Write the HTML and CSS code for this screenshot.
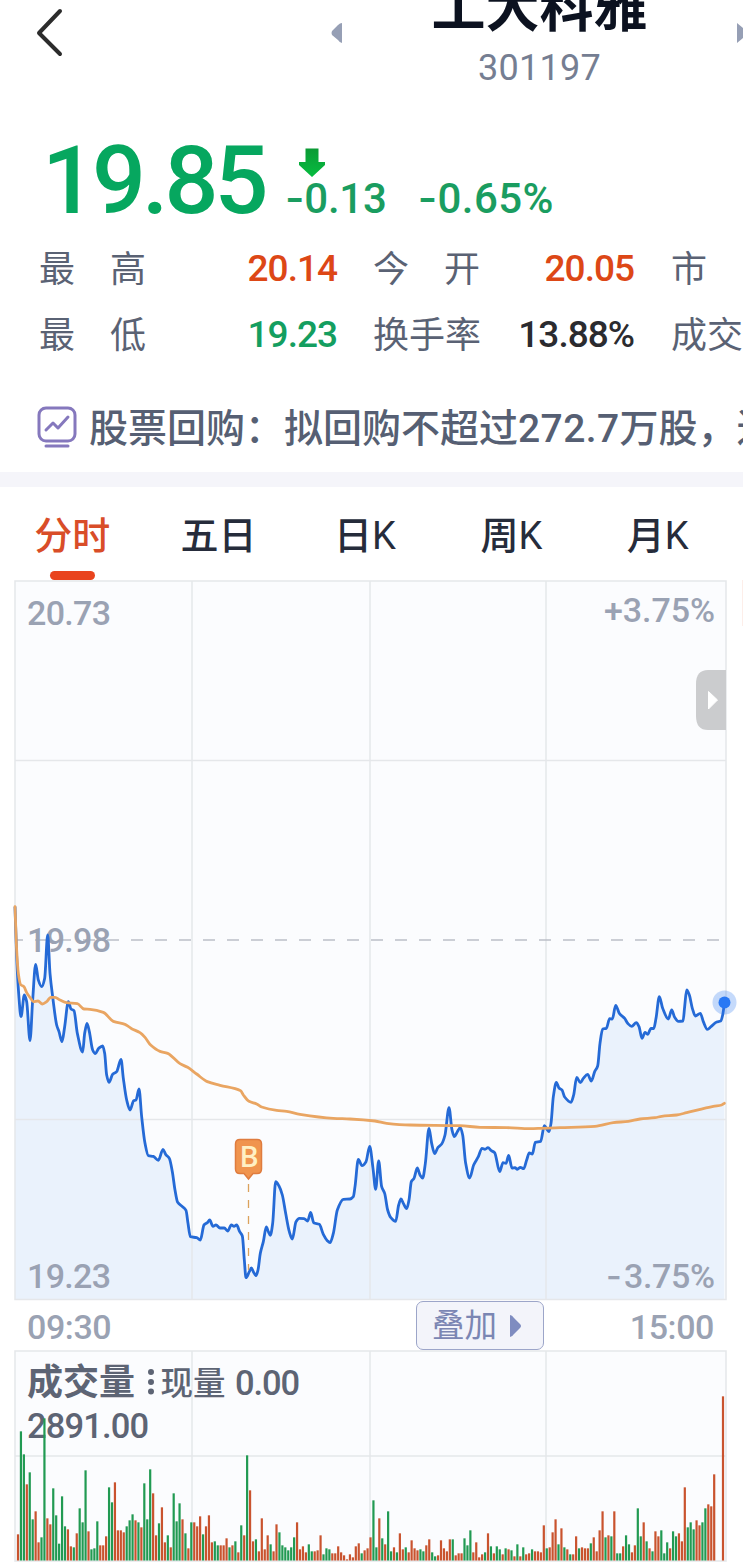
FILE: index.html
```html
<!DOCTYPE html>
<html lang="zh">
<head>
    <meta charset="UTF-8">
    <meta name="viewport" content="width=device-width, initial-scale=1.0">
    <title>工大科雅 301197</title>
    <link rel="stylesheet" href="styles.css">
</head>
<body>
    <header class="header">
        <svg class="back" width="28" height="50" viewBox="0 0 28 50"><path d="M25 3 L4 25 L25 46" /></svg>
        <svg class="prev" width="12" height="20" viewBox="0 0 12 20"><path d="M11 0 V20 Q9 20 7 17 L1 12 Q0 10 1 8 L7 2 Q9 0 11 0Z" /></svg>
        <div class="stock">
            <h1>工大科雅</h1>
            <div class="code">301197</div>
        </div>
        <svg class="next" width="12" height="20" viewBox="0 0 12 20"><path d="M0 0 V20 L12 10Z" /></svg>
    </header>

    <section class="quote">
        <div class="price">19.85</div>
        <div class="change">
            <svg class="arrow" width="28" height="30" viewBox="0 0 28 30">
                <defs>
                    <linearGradient id="arrowFill" x1="0" y1="0" x2="0" y2="1">
                        <stop offset="0" stop-color="#0b9a35" />
                        <stop offset="1" stop-color="#06bd40" />
                    </linearGradient>
                </defs>
                <path d="M7.500 0.500 H20.500 V14 H27 V17 L14 29 L1 17 V14 H7.500Z" fill="url(#arrowFill)" />
            </svg>
            <div class="change-values">
                <span><i class="sign">-</i>0.13</span>
                <span><i class="sign">-</i>0.65%</span>
            </div>
        </div>
    </section>

    <section class="stats">
        <div class="label"><span>最</span><span>高</span></div>
        <div class="value up">20.14</div>
        <div class="label"><span>今</span><span>开</span></div>
        <div class="value up">20.05</div>
        <div class="label"><span>市</span></div>
        <div class="label"><span>最</span><span>低</span></div>
        <div class="value down">19.23</div>
        <div class="label"><span>换</span><span>手</span><span>率</span></div>
        <div class="value">13.88%</div>
        <div class="label"><span>成</span><span>交</span></div>
    </section>

    <section class="news">
        <svg width="40" height="42" viewBox="0 0 40 42">
            <rect x="2" y="2" width="36" height="33" rx="7" />
            <path d="M9 24 L16 17 L21 22 L31 11" />
            <path d="M9 40 H31" />
        </svg>
        <span class="news-text">股票回购：拟回购不超过<b>272.7</b>万股，进</span>
    </section>

    <nav class="tabs">
        <a class="tab active">分时</a>
        <a class="tab">五日</a>
        <a class="tab">日<b>K</b></a>
        <a class="tab">周<b>K</b></a>
        <a class="tab">月<b>K</b></a>
    </nav>

    <svg class="price-chart" width="743" height="721" viewBox="0 580 743 721">
        <rect class="plot" x="15" y="581" width="711" height="718.5" />
        <path id="area" class="area" />
        <path class="grid" d="M15 760.5H726M15 1119.5H726M192 581V1299M370 581V1299M546 581V1299" />
        <rect class="frame" x="15" y="581" width="711" height="718.5" />
        <path class="base" d="M15 940H726" />
        <text class="axis" x="27" y="625" textLength="84">20.73</text>
        <text class="axis" x="27" y="952" textLength="84">19.98</text>
        <text class="axis" x="27" y="1288" textLength="84">19.23</text>
        <text class="axis" x="604" y="622" textLength="111">+3.75%</text>
        <text class="axis" x="624" y="1288" textLength="91">3.75%</text>
        <text class="axis sign" x="606" y="1288">-</text>
        <path id="line" class="line" />
        <path id="avg" class="avg" />
        <circle cx="724.5" cy="1002.5" r="12" fill="#2f7bf0" opacity=".28" />
        <circle cx="724.5" cy="1002.5" r="6" fill="#2878f4" />
        <path class="mark-line" d="M248.5 1184V1270" />
        <path class="mark" d="M240 1139.5H257Q261.500 1139.500 261.500 1144V1169Q261.500 1173.500 257 1173.500H253L248.500 1179L244 1173.500H240Q235.500 1173.500 235.500 1169V1144Q235.500 1139.500 240 1139.500Z" />
        <text class="mark-text" x="249" y="1167">B</text>
        <path class="handle" d="M726 670V730H708Q696 730 696 716V684Q696 670 708 670Z" />
        <path class="handle-arrow" d="M708.500 691.500L717.500 700L708.500 709Z" />
        <path class="next-panel" d="M742.500 580V626" />
    </svg>

    <div class="time-row">
        <span>09:30</span>
        <button class="overlay">叠加<svg width="13" height="24" viewBox="0 0 13 24"><path d="M1 1Q3 1 5 4L11 10Q13 12 11 14L5 20Q3 23 1 23Z" /></svg></button>
        <span>15:00</span>
    </div>

    <svg class="volume-chart" width="743" height="214" viewBox="0 1350 743 214">
        <rect class="plot" x="15" y="1351" width="711" height="210" />
        <path class="grid" d="M15 1456H726M192 1351V1560M370 1351V1560M546 1351V1560" />
        <rect class="frame" x="15" y="1351" width="711" height="210" />
        <text class="vol-title" x="27" y="1395">成交量</text>
        <path class="dots" d="M151 1372V1372M151 1382V1382M151 1391.500V1391.500" />
        <text class="vol-text cjk" x="160.500" y="1395">现量</text>
        <text class="vol-text" x="235" y="1395" textLength="65">0.00</text>
        <text class="vol-text" x="27" y="1438" textLength="122">2891.00</text>
        <g id="bars"></g>
    </svg>

    <script src="chart.js"></script>
</body>
</html>
```
FILE: styles.css
```css
body {
    margin: 0;
    width: 743px;
    height: 1564px;
    overflow: hidden;
    background: #fff;
    color: #2b2b2f;
    font-family: Roboto, "Noto Sans CJK SC", sans-serif;
    font-weight: 500;
}

.header {
    display: flex;
    height: 110px;
    overflow: hidden;
}

.header svg {
    flex: none;
    fill: #969fb5;
}

.header .back {
    margin: 8px 0 0 35px;
    fill: none;
    stroke: #2c2c2c;
    stroke-width: 4;
    stroke-linecap: round;
    stroke-linejoin: round;
}

.prev {
    margin: 23px 0 0 268px;
}

.stock {
    width: 393px;
    flex: none;
    text-align: center;
}

h1 {
    margin: -21px 0 0;
    height: 66px;
    line-height: 60px;
    font-size: 54px;
    font-weight: 700;
    color: #0c1220;
}

.code {
    line-height: 46px;
    font-size: 36px;
    font-weight: 400;
    letter-spacing: 0.3px;
    color: #757e92;
}

.next {
    margin: 23px 0 0 1px;
}

.quote {
    display: flex;
    height: 125px;
    padding-left: 42px;
}

.price {
    width: 243px;
    line-height: 142px;
    font-size: 95px;
    letter-spacing: -4px;
    color: #06a75f;
}

.arrow {
    display: block;
    margin: 38px 0 0 13px;
}

.change-values {
    display: flex;
    gap: 31px;
    line-height: 40px;
    font-size: 42px;
    color: #1a9d60;
}

.change-values span {
    letter-spacing: -0.2px;
}

.change-values span + span {
    letter-spacing: 0.4px;
}

.sign {
    font-family: Inter, sans-serif;
    font-style: normal;
}

.stats {
    display: grid;
    grid-template-columns: 107px 192px 35px 107px 155px 36px 107px;
    grid-template-rows: 66px 66px;
    margin-left: 39px;
    line-height: 66px;
    font-size: 36px;
}

.label {
    display: flex;
    justify-content: space-between;
    padding-top: 2px;
    font-weight: 400;
    color: #5a6274;
}

.stats .label:nth-child(5n + 3) {
    grid-column: 4;
}

.stats .label:nth-child(5n) {
    grid-column: 7;
}

.stats .label:nth-child(10) {
    justify-content: flex-start;
}

.value {
    text-align: right;
    padding: 1px 1px 0 0;
    font-size: 37px;
    letter-spacing: -1px;
}

.up {
    color: #dd4716;
}

.down {
    color: #149e60;
}

.news {
    display: flex;
    align-items: center;
    gap: 12px;
    height: 105px;
    padding: 15px 0 0 37px;
    box-sizing: border-box;
    white-space: nowrap;
    font-size: 39px;
    color: #565f73;
}

.news svg {
    flex: none;
    fill: none;
    stroke: #8578bd;
    stroke-width: 3;
    stroke-linecap: round;
    stroke-linejoin: round;
}

.news-text {
    margin-top: -4px;
}

.news b {
    font-weight: 500;
    letter-spacing: 0.4px;
}

.tabs {
    display: grid;
    grid-template-columns: repeat(5, 146.4px);
    height: 93px;
    border-top: 15px solid #f5f5fa;
}

.tab {
    position: relative;
    text-align: center;
    line-height: 98px;
    font-size: 38px;
    color: #262c3b;
    text-indent: -2px;
}

.tab b {
    font-weight: 400;
}

.tab.active {
    color: #d94d28;
}

.tab.active::after {
    content: '';
    position: absolute;
    left: 50px;
    top: 84px;
    width: 45px;
    height: 9px;
    border-radius: 5px;
    background: #e9441e;
}

.price-chart,
.volume-chart {
    display: block;
}

.plot {
    fill: #fbfcfe;
}

.grid,
.frame {
    fill: none;
    stroke: #e5e7ea;
    stroke-width: 1.5;
}

.area {
    fill: #eaf2fc;
}

.base {
    stroke: #bcbfc8;
    stroke-width: 1.6;
    stroke-dasharray: 12 12;
    stroke-dashoffset: 4;
}

.axis {
    font-size: 34px;
    fill: #9aa2b3;
}

.line {
    fill: none;
    stroke: #256ad6;
    stroke-width: 2.8;
    stroke-linejoin: round;
}

.avg {
    fill: none;
    stroke: #e9a562;
    stroke-width: 2.8;
    stroke-linecap: round;
}

.mark {
    fill: #f0944e;
    stroke: #df7c3f;
    stroke-width: 1.5;
}

.mark-line {
    stroke: #dba25c;
    stroke-width: 1.3;
    stroke-dasharray: 8 8;
}

.mark-text {
    font-family: "Open Sans", sans-serif;
    font-size: 29px;
    font-weight: 600;
    text-anchor: middle;
    fill: #fff0c4;
}

.handle {
    fill: #cbccce;
}

.handle-arrow {
    fill: #fff;
    stroke: #fff;
    stroke-linejoin: round;
}

.next-panel {
    stroke: #fdeee9;
}

.time-row {
    display: flex;
    align-items: center;
    justify-content: space-between;
    height: 49px;
    padding: 0 29px 0 27px;
    font-size: 34px;
    letter-spacing: -0.4px;
    color: #9aa2b3;
}

.time-row span {
    padding-top: 3px;
}

.overlay {
    display: flex;
    align-items: center;
    justify-content: center;
    gap: 12px;
    width: 128px;
    height: 49px;
    margin-left: 218px;
    padding: 0 5px 0 0;
    border: 1.5px solid #9ca5c9;
    border-radius: 7px;
    background: #f3f4fa;
    font-family: inherit;
    font-size: 32.5px;
    line-height: 40px;
    color: #7b86b3;
}

.overlay svg {
    fill: #7f8cc0;
}

.vol-title {
    font-size: 36px;
    font-weight: 700;
    fill: #5d6474;
}

.vol-text {
    font-size: 34.5px;
    fill: #5d6474;
}

.cjk {
    font-size: 32.5px;
}

.dots {
    stroke: #5d6474;
    stroke-width: 6;
    stroke-linecap: round;
}

.bar-up {
    fill: #c9532e;
}

.bar-down {
    fill: #219a52;
}
```
FILE: chart.js
```javascript
// every segment: [origin x, origin y, points in 1/3 px]
const priceData = [
    [0, 890, '45,50 50,200 56,310 63,380 73,315 80,335 90,452 98,330 107,223 115,270 125,290 134,265 143,135 150,250 158,320 170,405 177,425 186,455 194,410 205,335 213,357 222,362 232,430 248,486 254,430 261,400 268,425 278,480 286,491 296,475 308,468 314,490 320,555 327,577 338,553 350,545 363,508 370,565 380,630 390,660 401,632 408,630 417,597 425,680 435,760 445,797 460,799 475,811'],
    [130, 1090, '99,178 107,193 118,205 127,245 135,300 143,337 155,348 168,361 174,400 181,440 200,443 211,450 222,405 232,398 239,390 249,409 258,405 270,414 283,414 293,423 304,405 312,409 320,405 329,425 337,438 343,510 348,563 358,545 364,534 370,545 378,557 384,540 391,490 400,455 409,411 415,425 421,436 428,400 437,275 447,288 457,315 467,370 478,425 487,447 498,395 508,385 522,386 533,393 542,367 551,398 568,403 580,433 592,452 600,458 610,430 622,360 640,328'],
    [350, 1080, '0,357 10,350 15,320 25,238 36,257 48,245 59,199 69,265 77,328 86,243 95,320 104,340 113,390 122,412 137,424 146,375 153,357 160,370 170,386 177,360 184,305 192,295 202,264 210,285 218,294 226,250 237,145 245,190 254,221 264,202 275,192 285,165 297,83 306,150 313,170 322,155 331,143 338,165 347,250 359,294 371,255 385,230 396,205 405,208 414,203 424,212 434,218 449,275 459,248 468,250 476,226 486,264 495,263 502,268 511,262 521,266 530,240 538,219 547,222 556,187 572,184 583,137 591,148 597,155 603,130 610,50'],
    [540, 960, '49,367 57,384 66,390 74,411 93,427 101,405 110,352 121,368 130,355 143,343 154,363 164,335 173,318 180,250 188,207 199,205 209,176 217,177 227,136 238,160 254,175 263,190 275,199 289,188 297,200 306,235 315,217 323,223 333,205 341,206 348,175 358,110 368,145 385,177 395,150 404,172 415,184 429,183 434,140 440,90 448,105 457,145 466,168 481,160 490,185 502,208 513,200 530,186 542,183 548,165 553,130']
];

const avgData = [
    [0, 890, '45,50 50,180 55,250 62,284 72,290 80,308 92,325 100,335 114,333 127,342 140,335 152,322 165,322 180,330 200,338 232,341 252,357 270,358 310,367 340,394 375,403 395,416 420,428 435,442 452,465 480,484 503,490 540,521 563,532 590,552 622,575 660,586 722,602'],
    [130, 1090, '340,15 357,34 380,42 395,51 440,61 470,64 510,73 610,85'],
    [350, 1080, '0,117 75,123 110,130 180,135 330,137 390,142 470,143 540,146'],
    [540, 960, '5,505 60,503 165,499 220,488 265,484 300,477 345,473 365,469 410,465 440,458 520,439 545,435 553,430']
];

// bar tops in 1/3 px, negative = falling minute, 0 = no trades
const volumeTops = [
    583, -274, -343, 433, -397, -538, 514, 607, -592, -235, 535, 553, -445, -526, -611, -469, -559, 568, 619, -622,
    580, -505, -547, -391, 574, -628, -625, -544, 616, 616, 589, -442, -487, 427, 571, 571, 577, -559, -541, -523,
    541, -547, 562, -430, -538, -388, 460, 586, -550, 502, 607, -586, 622, -460, -544, -490, 538, -580, 625, -547,
    547, 559, 529, -583, 559, 526, 607, -604, -616, 616, 616, 595, -622, 616, -604, 637, -556, 586, -346, 451,
    604, -598, 634, 535, 628, 586, -613, 634, 553, -577, -616, -622, -631, -622, -592, 547, 628, 619, 637, -613,
    -634, 634, 631, 586, -643, -625, -628, 640, 640, 619, 637, 646, 658, 643, 652, 619, 610, -640, 631, 625,
    592, -481, -622, 535, -595, 613, -514, -634, 622, -637, 580, 628, -622, 637, 601, 625, 631, -628, -634, 616,
    598, -637, -649, 646, 601, 625, 634, 598, -598, 646, 640, 640, -595, -616, -571, 637, 607, 652, 643, -637,
    580, -619, 640, -619, -628, 643, -625, 628, -631, 649, -613, 649, -622, 643, 640, -628, 634, 634, 637, 556,
    -625, 622, 577, 538, -613, 565, -622, 628, -643, 643, 589, -625, 622, 625, 625, -610, 592, 634, 571, 514,
    -592, 586, -589, 514, -640, -640, 619, -586, -613, 637, 616, -505, -589, 547, -604, 625, -634, 574, 589, -571,
    -640, -607, 625, -574, -589, 580, 604, 442, -562, -547, -568, 541, 556, -547, -505, 493, 499, 403, 0, 0, 169
];

function readPoints(segments) {
    const points = [];
    segments.forEach(([ox, oy, text]) => {
        text.split(' ').forEach(pair => {
            const [x, y] = pair.split(',').map(Number);
            points.push([ox + x / 3, oy + y / 3]);
        });
    });
    return points;
}

// smooth curve that never overshoots the highs and lows
function curve(p) {
    const n = p.length;
    const slope = [];
    for (let i = 0; i < n - 1; i++) {
        slope.push((p[i + 1][1] - p[i][1]) / (p[i + 1][0] - p[i][0]));
    }
    const m = p.map((_, i) => {
        if (i === 0) return slope[0];
        if (i === n - 1) return slope[n - 2];
        const a = slope[i - 1], b = slope[i];
        return a * b <= 0 ? 0 : 2 * a * b / (a + b);
    });
    let d = `M${p[0][0]} ${p[0][1]}`;
    for (let i = 0; i < n - 1; i++) {
        const h = (p[i + 1][0] - p[i][0]) / 3;
        d += `C${p[i][0] + h} ${p[i][1] + m[i] * h} ${p[i + 1][0] - h} ${p[i + 1][1] - m[i + 1] * h} ${p[i + 1][0]} ${p[i + 1][1]}`;
    }
    return d;
}

const priceLine = curve(readPoints(priceData));
document.getElementById('line').setAttribute('d', priceLine);
document.getElementById('area').setAttribute('d', priceLine + 'V1299H15Z');
document.getElementById('avg').setAttribute('d', curve(readPoints(avgData)));

const bars = document.getElementById('bars');
const step = 705 / (volumeTops.length - 1);
volumeTops.forEach((top, i) => {
    if (!top) return;
    const y = 1340 + Math.abs(top) / 3;
    const rect = document.createElementNS('http://www.w3.org/2000/svg', 'rect');
    rect.setAttribute('x', 16.9 + i * step);
    rect.setAttribute('y', y);
    rect.setAttribute('width', 2.2);
    rect.setAttribute('height', 1560.5 - y);
    rect.setAttribute('class', top > 0 ? 'bar-up' : 'bar-down');
    bars.appendChild(rect);
});
```
